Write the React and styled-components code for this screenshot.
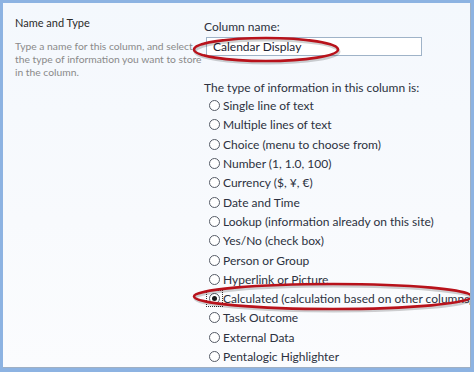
import { createGlobalStyle, styled } from 'styled-components';

const GlobalStyle = createGlobalStyle`
	html, body {
		margin: 0;
		padding: 0;
		background: #ffffff;
	}
	body {
		font-family: Lato, 'Open Sans', sans-serif;
	}
`;

const Frame = styled.div`
	width: 474px;
	height: 372px;
	box-sizing: border-box;
	border: 3px solid #8db3e2;
	border-bottom-width: 4px;
	background: #8db3e2;
`;

const Panel = styled.div`
	position: relative;
	height: 100%;
	box-sizing: border-box;
	display: grid;
	grid-template-columns: 200px 1fr;
	overflow: hidden;
	background: linear-gradient(180deg, #f4f8fd 0%, #f8fafd 60%, #fbfcfe 100%);
	border-right: 1px solid #9fb0c4;
	border-bottom: 1px solid #9fb0c4;
`;

const Intro = styled.div`
	padding: 13px 0 0 12px;
`;

const Title = styled.h3`
	margin: 0 0 10px;
	font-size: 11px;
	line-height: 14px;
	font-weight: 400;
	color: #2b2b2b;
`;

const Description = styled.p`
	margin: 0;
	font-size: 10.3px;
	line-height: 13px;
	color: #8a8a8a;
	white-space: nowrap;
`;

const Fields = styled.div`
	padding: 16px 0 0 1px;
	white-space: nowrap;
`;

const Label = styled.div`
	font-size: 12px;
	line-height: 16px;
	color: #2c3140;
`;

const NameInput = styled.input`
	display: block;
	width: 216px;
	height: 19px;
	box-sizing: border-box;
	margin: 2px 0 24px 2px;
	padding: 0 6px;
	border: 1px solid #9fb3c8;
	background: #ffffff;
	font-family: inherit;
	font-size: 12px;
	color: #1e2433;
	outline: none;
`;

const TypeList = styled.div`
	display: flex;
	flex-direction: column;
`;

const Option = styled.label`
	display: flex;
	align-items: center;
	gap: 3px;
	height: 19.3px;
	font-size: 12px;
	color: #2c3140;
`;

const Focus = styled.span`
	display: flex;
	align-items: center;
	justify-content: center;
	width: 17px;
	height: 17px;
	margin-left: 2px;
	margin-right: -3px;
	box-sizing: border-box;
	border: 1px dotted ${({ $focused }) => ($focused ? '#333' : 'transparent')};
`;

const Radio = styled.span`
	display: flex;
	align-items: center;
	justify-content: center;
	width: 11px;
	height: 11px;
	box-sizing: border-box;
	border: 1px solid #555b66;
	border-radius: 50%;
	background: #ffffff;

	&::after {
		content: '';
		display: ${({ $checked }) => ($checked ? 'block' : 'none')};
		width: 5px;
		height: 5px;
		border-radius: 50%;
		background: #1a1a1a;
	}
`;

const Highlight = styled.svg`
	position: absolute;
	overflow: visible;
	pointer-events: none;
`;

const types = [
	'Single line of text',
	'Multiple lines of text',
	'Choice (menu to choose from)',
	'Number (1, 1.0, 100)',
	'Currency ($, ¥, €)',
	'Date and Time',
	'Lookup (information already on this site)',
	'Yes/No (check box)',
	'Person or Group',
	'Hyperlink or Picture',
	'Calculated (calculation based on other columns)',
	'Task Outcome',
	'External Data',
	'Pentalogic Highlighter',
];

const Ring = ({ left, top, width, height }) => (
	<Highlight
		style={{ left, top, width, height }}
		viewBox={`0 0 ${width} ${height}`}
	>
		<ellipse
			cx={width / 2 + 1}
			cy={height / 2 + 2}
			rx={width / 2 - 2}
			ry={height / 2 - 2}
			fill="none"
			stroke="rgba(0,0,0,0.18)"
			strokeWidth="3"
		/>
		<ellipse
			cx={width / 2}
			cy={height / 2}
			rx={width / 2 - 2}
			ry={height / 2 - 2}
			fill="none"
			stroke="#b8121b"
			strokeWidth="2.6"
		/>
	</Highlight>
);

export default function App() {
	const selected = 'Calculated (calculation based on other columns)';

	return (
		<>
			<GlobalStyle />
			<Frame>
				<Panel>
					<Intro>
						<Title>Name and Type</Title>
						<Description>
							Type a name for this column, and select
							<br />
							the type of information you want to store
							<br />
							in the column.
						</Description>
					</Intro>
					<Fields>
						<Label>Column name:</Label>
						<NameInput defaultValue="Calendar Display" />
						<Label>The type of information in this column is:</Label>
						<TypeList>
							{types.map((type) => (
								<Option key={type}>
									<Focus $focused={type === selected}>
										<Radio $checked={type === selected} />
									</Focus>
									{type}
								</Option>
							))}
						</TypeList>
					</Fields>
					<Ring left={189} top={33} width={148} height={27} />
					<Ring left={189} top={279} width={282} height={29} />
				</Panel>
			</Frame>
		</>
	);
}
